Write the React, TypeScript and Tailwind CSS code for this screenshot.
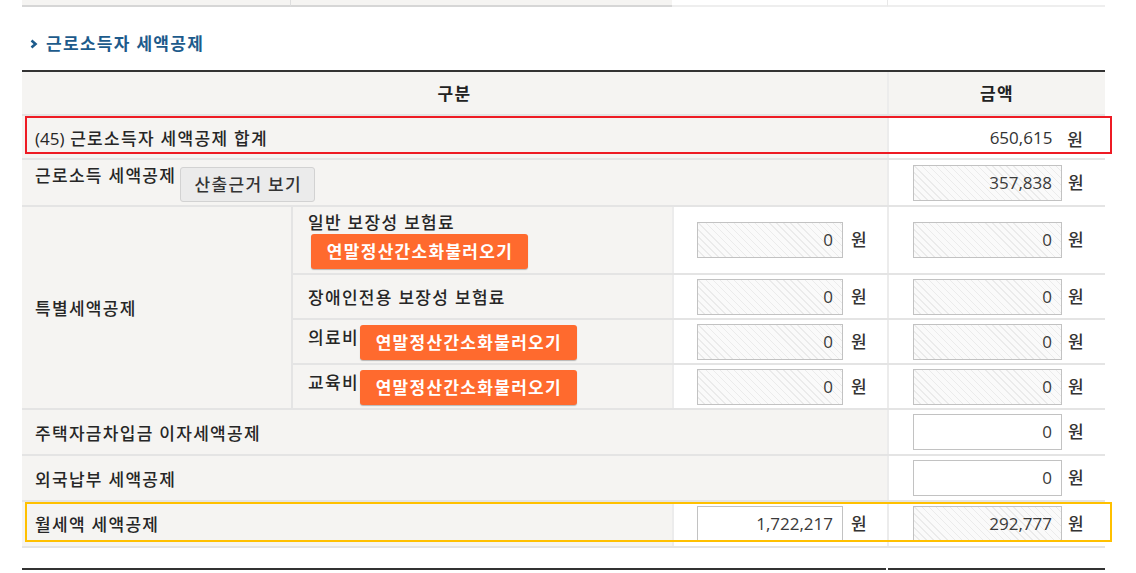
import React from "react";

const HATCH =
  "bg-[repeating-linear-gradient(45deg,#fafafa_0px,#fafafa_4px,#ebebeb_4px,#ebebeb_5px)]";

function Won({ className = "" }: { className?: string }) {
  return <span className={`text-[17px] leading-[22px] text-[#333] tracking-normal ${className}`}>원</span>;
}

function AmountBox({
  value,
  hatched,
  wide,
}: {
  value: string;
  hatched?: boolean;
  wide?: boolean;
}) {
  return (
    <div
      className={`${wide ? "w-[149px]" : "w-[146px]"} h-[36px] border border-[#c2c2c2] flex items-center justify-end pr-[9px] text-[17px] tracking-normal text-[#3a3a3a] ${
        hatched ? HATCH : "bg-white"
      }`}
    >
      {value}
    </div>
  );
}

function MidCell({ value, hatched = true }: { value: string; hatched?: boolean }) {
  return (
    <div className="w-[215px] h-full border-l-2 border-[#ececec] bg-white flex items-center pl-[23px] gap-[8px]">
      <AmountBox value={value} hatched={hatched} />
      <Won />
    </div>
  );
}

function RightCell({ value, hatched = true }: { value: string; hatched?: boolean }) {
  return (
    <div className="w-[218px] h-full border-l-2 border-[#ececec] bg-white flex items-center pl-[24px] gap-[6px]">
      <AmountBox value={value} hatched={hatched} wide />
      <Won />
    </div>
  );
}

function OrangeButton() {
  return (
    <div className="w-[217px] h-[35px] rounded-[3px] bg-[#ff6a2e] shadow-[0_1px_1px_rgba(0,0,0,0.25)] flex items-center justify-center pl-[1px] text-white font-bold text-[17px] leading-[22px]">
      연말정산간소화불러오기
    </div>
  );
}

export default function App() {
  return (
    <div className="relative w-[1136px] h-[573px] overflow-hidden bg-white font-['Open_Sans','Noto_Sans_CJK_KR',sans-serif] text-[17px] leading-[22px] tracking-[1.3px] font-medium text-[#262626]">
      {/* previous table fragment */}
      <div className="ml-[22px] w-[1083px] h-[7px] flex">
        <div className="w-[269px] h-full bg-[#f5f4f2] border-r border-[#dedede] border-b-2 border-b-[#d6d6d6]" />
        <div className="w-[381px] h-full bg-[#f5f4f2] border-b-2 border-[#d6d6d6]" />
        <div className="w-[215px] h-full bg-white border-b-2 border-[#eeeeee]" />
        <div className="w-[218px] h-full bg-white border-l border-[#e8e8e8] border-b-2 border-b-[#eeeeee]" />
      </div>

      {/* section title */}
      <div className="mt-[26px] ml-[30px] h-[22px] flex items-center text-[#1d5b8c] font-bold">
        <svg width="8" height="10" viewBox="0 0 8 10" className="mr-[8px]">
          <polyline points="1.5,1.5 5.5,5 1.5,8.5" fill="none" stroke="#1d5b8c" strokeWidth="2.6" />
        </svg>
        <span>근로소득자 세액공제</span>
      </div>

      {/* main table */}
      <div className="mt-[15px] ml-[22px] w-[1083px] border-t-2 border-[#333]">
        {/* header */}
        <div className="h-[44px] flex border-b-2 border-[#e4e4e4] font-bold text-[#222]">
          <div className="w-[865px] h-full bg-[#f5f4f2] flex items-center justify-center pt-[2px]">구분</div>
          <div className="w-[218px] h-full bg-[#f5f4f2] border-l-2 border-[#ececec] flex items-center justify-center pt-[2px]">
            금액
          </div>
        </div>

        {/* (45) */}
        <div className="h-[44px] flex border-b-2 border-[#e4e4e4]">
          <div className="w-[865px] h-full bg-[#f5f4f2] flex items-center pl-[13px] pt-[4px]">
            <span className="tracking-normal">(45)</span>
            <span>&nbsp;근로소득자 세액공제 합계</span>
          </div>
          <div className="w-[218px] h-full bg-white border-l-2 border-[#ececec] flex items-center justify-end pr-[22px] pt-[5px]">
            <span className="text-[#333] tracking-normal pb-[3px]">650,615</span>
            <Won className="ml-[15px]" />
          </div>
        </div>

        {/* 근로소득 세액공제 */}
        <div className="h-[47px] flex border-b-2 border-[#e4e4e4]">
          <div className="w-[865px] h-full bg-[#f5f4f2] flex items-start pl-[13px] pt-[4px]">
            <span className="mt-[1px]">근로소득 세액공제</span>
            <div className="ml-[4px] mt-[3px] w-[135px] h-[35px] rounded-[3px] border border-[#d2d2d2] bg-[#ebebeb] flex items-center justify-center pl-[1px] text-[#333]">
              산출근거 보기
            </div>
          </div>
          <RightCell value="357,838" />
        </div>

        {/* 특별세액공제 */}
        <div className="flex">
          <div className="w-[269px] bg-[#f5f4f2] border-b-2 border-[#e4e4e4] flex items-center pl-[13px] pt-[3px]">
            특별세액공제
          </div>
          <div className="w-[814px] flex flex-col">
            <div className="h-[68px] flex border-b-2 border-[#e4e4e4]">
              <div className="w-[381px] h-full bg-[#f5f4f2] border-l-2 border-[#e4e4e4] pl-[15px] pt-[4px] flex flex-col items-start">
                <span className="mt-[1px]">일반 보장성 보험료</span>
                <div className="ml-[3px]">
                  <OrangeButton />
                </div>
              </div>
              <MidCell value="0" />
              <RightCell value="0" />
            </div>
            <div className="h-[45px] flex border-b-2 border-[#e4e4e4]">
              <div className="w-[381px] h-full bg-[#f5f4f2] border-l-2 border-[#e4e4e4] pl-[15px] pt-[3px] flex items-center">
                장애인전용 보장성 보험료
              </div>
              <MidCell value="0" />
              <RightCell value="0" />
            </div>
            <div className="h-[45px] flex border-b-2 border-[#e4e4e4]">
              <div className="w-[381px] h-full bg-[#f5f4f2] border-l-2 border-[#e4e4e4] pl-[15px] pt-[5px] flex items-start">
                <span className="mt-[2px]">의료비</span>
                <div className="ml-[1px]">
                  <OrangeButton />
                </div>
              </div>
              <MidCell value="0" />
              <RightCell value="0" />
            </div>
            <div className="h-[45px] flex border-b-2 border-[#e4e4e4]">
              <div className="w-[381px] h-full bg-[#f5f4f2] border-l-2 border-[#e4e4e4] pl-[15px] pt-[5px] flex items-start">
                <span className="mt-[2px]">교육비</span>
                <div className="ml-[1px]">
                  <OrangeButton />
                </div>
              </div>
              <MidCell value="0" />
              <RightCell value="0" />
            </div>
          </div>
        </div>

        {/* 주택자금차입금 */}
        <div className="h-[46px] flex border-b-2 border-[#e4e4e4]">
          <div className="w-[865px] h-full bg-[#f5f4f2] flex items-center pl-[13px] pt-[3px]">
            주택자금차입금 이자세액공제
          </div>
          <RightCell value="0" hatched={false} />
        </div>

        {/* 외국납부 */}
        <div className="h-[46px] flex border-b-2 border-[#e4e4e4]">
          <div className="w-[865px] h-full bg-[#f5f4f2] flex items-center pl-[13px] pt-[3px]">외국납부 세액공제</div>
          <RightCell value="0" hatched={false} />
        </div>

        {/* 월세액 */}
        <div className="h-[46px] flex border-b-2 border-[#e4e4e4]">
          <div className="w-[650px] h-full bg-[#f5f4f2] flex items-center pl-[13px] pt-[2px]">월세액 세액공제</div>
          <MidCell value="1,722,217" hatched={false} />
          <RightCell value="292,777" />
        </div>
      </div>

      {/* next table top border */}
      <div className="mt-[20px] ml-[22px] w-[1083px] flex gap-[2px]">
        <div className="w-[864px] h-[2px] bg-[#333]" />
        <div className="flex-1 h-[2px] bg-[#333]" />
      </div>

      {/* annotation boxes */}
      <div className="absolute left-[25px] top-[116px] w-[1087px] h-[38px] border-2 border-[#ee1b24] pointer-events-none" />
      <div className="absolute left-[25px] top-[502px] w-[1087px] h-[40px] border-2 border-[#ffc000] pointer-events-none" />
    </div>
  );
}
